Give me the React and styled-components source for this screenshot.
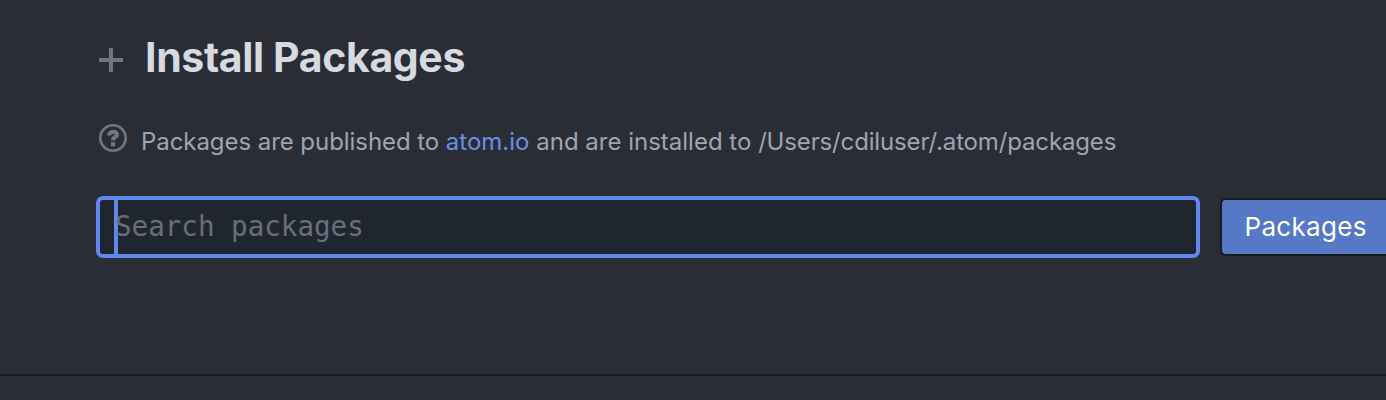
import React from "react";
import styled, { createGlobalStyle } from "styled-components";

const Global = createGlobalStyle`
  * { box-sizing: border-box; }
  body { margin: 0; background: #2a2d35; overflow: hidden; }
`;
const Panel = styled.main`
  height: 400px;
  overflow: hidden;
  background: #2a2d35;
  color: #9da5b4;
  font-family: Inter, sans-serif;
`;
const Section = styled.section`
  height: 376px;
  padding: 33px 0 0 96px;
  border-bottom: 2px solid #191b20;
`;
const Heading = styled.h1`
  display: flex;
  align-items: center;
  height: 48px;
  margin: 0;
  color: #d7dae0;
  font-size: 41px;
  font-weight: 700;
  letter-spacing: -0.36px;
  line-height: 48px;
  white-space: nowrap;
`;
const PlusIcon = styled.svg`
  width: 30px;
  height: 30px;
  margin: 6px 19px 0 0;
  flex: none;
`;
const Note = styled.p`
  display: flex;
  align-items: center;
  height: 36px;
  margin: 43px 0 0;
  font-size: 24px;
  line-height: 36px;
  white-space: pre;
`;
const HelpIcon = styled.svg`
  width: 28px;
  height: 28px;
  margin: 0 14px 8px 3px;
  flex: none;
`;
const NoteText = styled.span`
  letter-spacing: -0.06px;
`;
const Tail = styled.span`
  letter-spacing: 0;
`;
const Path = styled.span`
  letter-spacing: -0.15px;
`;
const Link = styled.a`
  color: #6790e6;
  letter-spacing: 0;
  text-decoration: none;
`;
const SearchRow = styled.div`
  display: flex;
  align-items: center;
  margin-top: 36px;
  width: 1400px;
`;
const SearchBox = styled.div`
  display: flex;
  align-items: center;
  width: 1104px;
  height: 62px;
  padding-left: 14px;
  border: 4px solid #6188ea;
  border-radius: 7px;
  background: #202630;
`;
const Caret = styled.span`
  width: 4px;
  height: 54px;
  margin-right: -3px;
  background: #6188ea;
`;
const Placeholder = styled.span`
  padding-bottom: 2px;
  color: #696e7b;
  font: 27.55px/52px "DejaVu Sans Mono", monospace;
`;
const Button = styled.button`
  width: 220px;
  height: 58px;
  margin: 0 0 0 20px;
  padding: 0 0 0 22.5px;
  border: 2px solid #181a1f;
  border-radius: 6px;
  background: #5778c7;
  color: #fff;
  font: 26px/54px Inter, sans-serif;
  letter-spacing: 0.3px;
  text-align: left;
`;

export default function App() {
  return (
    <Panel>
      <Global />
      <Section>
        <Heading>
          <PlusIcon viewBox="0 0 30 30"><path d="M3 15H27M15 3V27" stroke="#717782" strokeWidth="4" /></PlusIcon>
          Install Packages
        </Heading>
        <Note>
          <HelpIcon viewBox="0 0 28 28" fill="none" stroke="#717782">
            <circle cx="14" cy="14" r="12.7" strokeWidth="2.6" />
            <path d="M10 11.5C10 6.800 18 6.800 18 10.800C18 13.200 14 12.800 14 16.400" strokeWidth="4.2" />
            <path d="M14 18.200V22.300" strokeWidth="4.2" />
          </HelpIcon>
          <NoteText>
            Packages are published to <Link>atom.io</Link>
            <Tail> and are installed to </Tail>
            <Path>/Users/cdiluser/.atom/packages</Path>
          </NoteText>
        </Note>
        <SearchRow>
          <SearchBox><Caret /><Placeholder>Search packages</Placeholder></SearchBox>
          <Button>Packages</Button>
        </SearchRow>
      </Section>
    </Panel>
  );
}
